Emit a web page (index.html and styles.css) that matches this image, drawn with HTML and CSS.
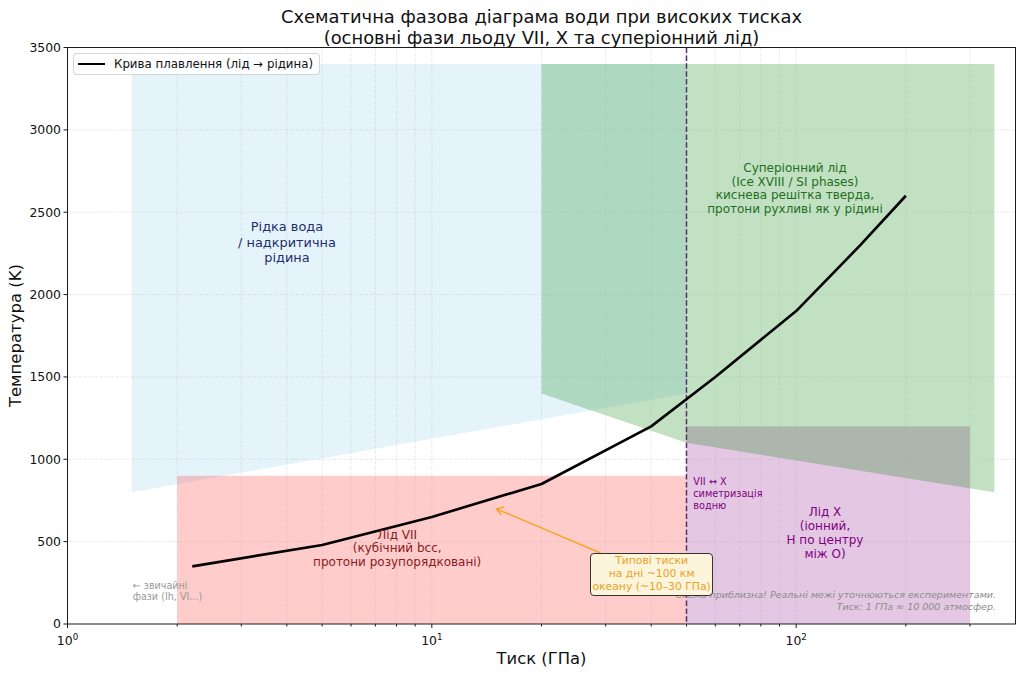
FILE: index.html
```html
<!DOCTYPE html>
<html lang="uk">
<head>
<meta charset="utf-8">
<title>Фазова діаграма води</title>
<link rel="stylesheet" href="styles.css">
</head>
<body>
<div class="figure">
  <h1 class="title">Схематична фазова діаграма води при високих тисках<br>(основні фази льоду VII, X та суперіонний лід)</h1>
  <div class="main">
    <div class="ylabel-col"><span class="ylabel">Температура (K)</span></div>
    <div class="axes">
      <svg class="canvas" width="949" height="578" viewBox="0 0 949 578">
        <g transform="translate(0.5,0.5)">
          <!-- fills -->
          <polygon class="f-liquid" points="64.16,444.73 618.99,345.91 618.99,16.5 64.16,16.5"/>
          <rect class="f-vii" x="109.68" y="428.26" width="509.31" height="148.24"/>
          <rect class="f-x" x="618.99" y="378.85" width="283.5" height="197.65"/>
          <polygon class="f-si" points="474.01,345.91 618.99,395.32 926.88,444.73 926.88,16.5 474.01,16.5"/>
          <!-- grid -->
          <g class="grid">
            <line x1="109.68" y1="0" x2="109.68" y2="576.5"/>
            <line x1="173.83" y1="0" x2="173.83" y2="576.5"/>
            <line x1="219.35" y1="0" x2="219.35" y2="576.5"/>
            <line x1="254.66" y1="0" x2="254.66" y2="576.5"/>
            <line x1="283.51" y1="0" x2="283.51" y2="576.5"/>
            <line x1="307.90" y1="0" x2="307.90" y2="576.5"/>
            <line x1="329.03" y1="0" x2="329.03" y2="576.5"/>
            <line x1="347.66" y1="0" x2="347.66" y2="576.5"/>
            <line x1="364.33" y1="0" x2="364.33" y2="576.5"/>
            <line x1="474.01" y1="0" x2="474.01" y2="576.5"/>
            <line x1="538.16" y1="0" x2="538.16" y2="576.5"/>
            <line x1="583.68" y1="0" x2="583.68" y2="576.5"/>
            <line x1="618.99" y1="0" x2="618.99" y2="576.5"/>
            <line x1="647.84" y1="0" x2="647.84" y2="576.5"/>
            <line x1="672.23" y1="0" x2="672.23" y2="576.5"/>
            <line x1="693.36" y1="0" x2="693.36" y2="576.5"/>
            <line x1="711.99" y1="0" x2="711.99" y2="576.5"/>
            <line x1="728.66" y1="0" x2="728.66" y2="576.5"/>
            <line x1="838.34" y1="0" x2="838.34" y2="576.5"/>
            <line x1="902.49" y1="0" x2="902.49" y2="576.5"/>
            <line x1="0" y1="494.14" x2="948" y2="494.14"/>
            <line x1="0" y1="411.79" x2="948" y2="411.79"/>
            <line x1="0" y1="329.44" x2="948" y2="329.44"/>
            <line x1="0" y1="247.08" x2="948" y2="247.08"/>
            <line x1="0" y1="164.73" x2="948" y2="164.73"/>
            <line x1="0" y1="82.37" x2="948" y2="82.37"/>
          </g>
          <!-- VII / X boundary -->
          <line class="vline" x1="618.99" y1="0" x2="618.99" y2="576.5"/>
          <!-- melting curve -->
          <polyline class="melt" points="124.76,518.85 254.66,497.44 364.33,469.44 474.01,436.5 583.68,378.85 647.84,329.44 728.66,263.55 792.82,197.67 838.34,148.25"/>
          <!-- annotation arrow -->
          <line class="arrow" x1="533" y1="505.5" x2="429.5" y2="461.6"/>
          <polyline class="arrow" points="436.6,459.6 429,461.4 434,467.4"/>
          <!-- spines -->
          <rect class="spine" x="0" y="0" width="948" height="576.5"/>
          <!-- ticks -->
          <g class="ticks">
            <line x1="-4" y1="576.5" x2="0" y2="576.5"/>
            <line x1="-4" y1="494.14" x2="0" y2="494.14"/>
            <line x1="-4" y1="411.79" x2="0" y2="411.79"/>
            <line x1="-4" y1="329.44" x2="0" y2="329.44"/>
            <line x1="-4" y1="247.08" x2="0" y2="247.08"/>
            <line x1="-4" y1="164.73" x2="0" y2="164.73"/>
            <line x1="-4" y1="82.37" x2="0" y2="82.37"/>
            <line x1="-4" y1="0" x2="0" y2="0"/>
            <line x1="0" y1="576.5" x2="0" y2="580.5"/>
            <line x1="364.33" y1="576.5" x2="364.33" y2="580.5"/>
            <line x1="728.66" y1="576.5" x2="728.66" y2="580.5"/>
          </g>
          <g class="ticks minor">
            <line x1="109.68" y1="576.5" x2="109.68" y2="579"/>
            <line x1="173.83" y1="576.5" x2="173.83" y2="579"/>
            <line x1="219.35" y1="576.5" x2="219.35" y2="579"/>
            <line x1="254.66" y1="576.5" x2="254.66" y2="579"/>
            <line x1="283.51" y1="576.5" x2="283.51" y2="579"/>
            <line x1="307.90" y1="576.5" x2="307.90" y2="579"/>
            <line x1="329.03" y1="576.5" x2="329.03" y2="579"/>
            <line x1="347.66" y1="576.5" x2="347.66" y2="579"/>
            <line x1="474.01" y1="576.5" x2="474.01" y2="579"/>
            <line x1="538.16" y1="576.5" x2="538.16" y2="579"/>
            <line x1="583.68" y1="576.5" x2="583.68" y2="579"/>
            <line x1="618.99" y1="576.5" x2="618.99" y2="579"/>
            <line x1="647.84" y1="576.5" x2="647.84" y2="579"/>
            <line x1="672.23" y1="576.5" x2="672.23" y2="579"/>
            <line x1="693.36" y1="576.5" x2="693.36" y2="579"/>
            <line x1="711.99" y1="576.5" x2="711.99" y2="579"/>
            <line x1="838.34" y1="576.5" x2="838.34" y2="579"/>
            <line x1="902.49" y1="576.5" x2="902.49" y2="579"/>
          </g>
          <!-- tick labels -->
          <g class="ticklabels ylabels">
            <text x="-6.5" y="580.9">0</text>
            <text x="-6.5" y="498.5">500</text>
            <text x="-6.5" y="416.2">1000</text>
            <text x="-6.5" y="333.8">1500</text>
            <text x="-6.5" y="251.5">2000</text>
            <text x="-6.5" y="169.1">2500</text>
            <text x="-6.5" y="86.8">3000</text>
            <text x="-6.5" y="4.4">3500</text>
          </g>
          <g class="ticklabels xlabels">
            <text x="0" y="597">10<tspan class="sup" dy="-5">0</tspan></text>
            <text x="364.33" y="597">10<tspan class="sup" dy="-5">1</tspan></text>
            <text x="728.66" y="597">10<tspan class="sup" dy="-5">2</tspan></text>
          </g>
        </g>
      </svg>

      <div class="legend">
        <span class="legend-line"></span>
        <span class="legend-text">Крива плавлення (лід → рідина)</span>
      </div>

      <div class="lbl lbl-liquid">Рідка вода<br>/ надкритична<br>рідина</div>
      <div class="lbl lbl-si">Суперіонний лід<br>(Ice XVIII / SI phases)<br>киснева решітка тверда,<br>протони рухливі як у рідині</div>
      <div class="lbl lbl-vii">Лід VII<br>(кубічний bcc,<br>протони розупорядковані)</div>
      <div class="lbl lbl-x">Лід X<br>(іонний,<br>Н по центру<br>між О)</div>
      <div class="note-sym">VII ↔ X<br>симетризація<br>водню</div>
      <div class="note-ordinary">← звичайні<br>фази (Ih, VI...)</div>
      <div class="note-approx">Схема приблизна! Реальні межі уточнюються експериментами.<br>Тиск: 1 ГПа ≈ 10 000 атмосфер.</div>
      <div class="callout">Типові тиски<br>на дні ~100 км<br>океану (~10–30 ГПа)</div>
    </div>
  </div>
  <div class="xlabel">Тиск (ГПа)</div>
</div>
</body>
</html>
```

FILE: styles.css
```css
html, body {
  margin: 0;
  padding: 0;
  background: #ffffff;
}

.figure {
  width: 1024px;
  height: 676px;
  display: flex;
  flex-direction: column;
  font-family: "DejaVu Sans", "Noto Sans", sans-serif;
  color: #111;
  overflow: hidden;
}

.title {
  margin: 0;
  height: 47px;
  box-sizing: border-box;
  padding-top: 6px;
  padding-left: 59px;
  font-size: 17.9px;
  line-height: 21px;
  font-weight: normal;
  text-align: center;
  color: #111;
  white-space: nowrap;
}

.main {
  display: flex;
  height: 578px;
}

.ylabel-col {
  width: 67px;
  display: flex;
  align-items: center;
  justify-content: flex-start;
  box-sizing: border-box;
  padding-left: 6px;
}

.ylabel {
  writing-mode: vertical-rl;
  transform: rotate(180deg);
  font-size: 16.5px;
  line-height: 19px;
  white-space: nowrap;
}

.axes {
  position: relative;
  width: 949px;
  height: 578px;
}

.canvas {
  display: block;
  overflow: visible;
}

.f-liquid { fill: #87ceeb; fill-opacity: 0.22; }
.f-vii { fill: #ff0000; fill-opacity: 0.2; }
.f-x { fill: #800080; fill-opacity: 0.22; }
.f-si { fill: #008000; fill-opacity: 0.24; }

.grid line {
  stroke: #b0b0b0;
  stroke-opacity: 0.32;
  stroke-width: 0.8;
  stroke-dasharray: 3.7 1.6;
}

.vline {
  stroke: #5b2a70;
  stroke-width: 1.5;
  stroke-dasharray: 5.5 2.4;
}

.melt {
  fill: none;
  stroke: #000;
  stroke-width: 2.6;
  stroke-linejoin: round;
}

.arrow {
  fill: none;
  stroke: #f5a623;
  stroke-width: 1.5;
  stroke-linejoin: miter;
}

.spine {
  fill: none;
  stroke: #1a1a1a;
  stroke-width: 1;
}

.ticks line {
  stroke: #1a1a1a;
  stroke-width: 1;
}

.ticklabels text {
  font-family: "DejaVu Sans", sans-serif;
  font-size: 12.4px;
  fill: #111;
}

.ylabels text { text-anchor: end; }
.xlabels text { text-anchor: middle; }
.xlabels .sup { font-size: 8.7px; }

.legend {
  position: absolute;
  left: 6px;
  top: 6px;
  width: 247px;
  height: 22px;
  box-sizing: border-box;
  border: 1px solid #d6d6d6;
  border-radius: 3px;
  background: rgba(255, 255, 255, 0.85);
  display: flex;
  align-items: center;
  padding-left: 4px;
  gap: 9px;
}

.legend-line {
  width: 27px;
  height: 2.6px;
  background: #000;
}

.legend-text {
  font-size: 11.8px;
  line-height: 14px;
  white-space: nowrap;
  color: #111;
}

.lbl {
  position: absolute;
  transform: translate(-50%, -50%);
  text-align: center;
  white-space: nowrap;
}

.lbl-liquid {
  left: 220px;
  top: 195.3px;
  font-size: 12.9px;
  line-height: 15.5px;
  color: #1f2d6b;
}

.lbl-si {
  left: 728px;
  top: 141.8px;
  font-size: 12px;
  line-height: 13.7px;
  color: #1f6e1f;
}

.lbl-vii {
  left: 330.2px;
  top: 501.7px;
  font-size: 12px;
  line-height: 13.6px;
  color: #8b1a1a;
}

.lbl-x {
  left: 758px;
  top: 487.4px;
  font-size: 12px;
  line-height: 13.9px;
  color: #800080;
}

.note-sym {
  position: absolute;
  left: 626.3px;
  top: 428.7px;
  font-size: 9.7px;
  line-height: 12px;
  color: #800080;
  white-space: nowrap;
}

.note-ordinary {
  position: absolute;
  left: 65.7px;
  top: 532.5px;
  font-size: 9.6px;
  line-height: 11px;
  color: #999;
  white-space: nowrap;
}

.note-approx {
  position: absolute;
  right: 20px;
  top: 542.2px;
  font-size: 9.5px;
  line-height: 11.7px;
  font-style: italic;
  color: #8c8c8c;
  text-align: right;
  white-space: nowrap;
}

.callout {
  position: absolute;
  left: 523px;
  top: 506.3px;
  width: 123.3px;
  height: 42.7px;
  box-sizing: border-box;
  border: 1px solid #333;
  border-radius: 4px;
  background: #fdf4dc;
  color: #e9a21d;
  font-size: 10.8px;
  line-height: 12.8px;
  text-align: center;
  white-space: nowrap;
  display: flex;
  align-items: center;
  justify-content: center;
}

.xlabel {
  margin-left: 67px;
  width: 949px;
  box-sizing: border-box;
  padding-top: 24px;
  font-size: 16.4px;
  line-height: 20px;
  text-align: center;
}
```
